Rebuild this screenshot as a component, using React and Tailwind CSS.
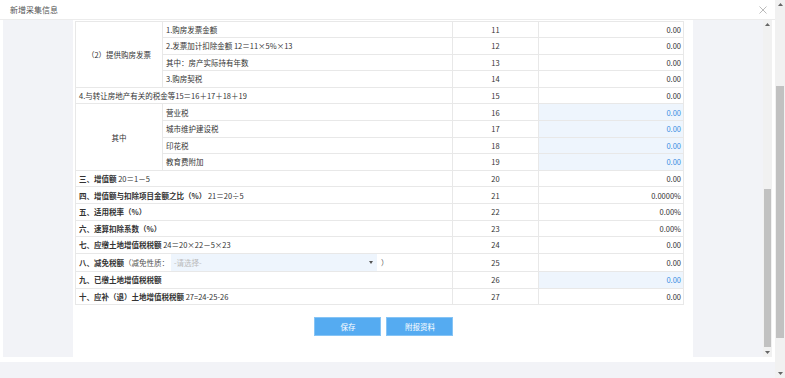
import React from 'react'

const font = { fontFamily: "'Noto Sans CJK SC', 'Noto Sans', sans-serif" }

function Tri({ down }) {
  return (
    <svg width="5" height="3" viewBox="0 0 5 3" className="block">
      {down ? <path d="M0 0 L5 0 L2.5 3 Z" fill="#666" /> : <path d="M0 3 L5 3 L2.5 0 Z" fill="#666" />}
    </svg>
  )
}

function Scrollbar({ thumbTop, thumbBottom, className }) {
  return (
    <div className={`relative bg-[#f1f1f1] ${className}`}>
      <div className="absolute left-0 right-0 top-[3px] flex justify-center"><Tri /></div>
      <div className="absolute left-[1px] right-[1px] bg-[#c1c1c1]" style={{ top: thumbTop, bottom: thumbBottom }} />
      <div className="absolute left-0 right-0 bottom-[3px] flex justify-center"><Tri down /></div>
    </div>
  )
}

const td = 'border border-[#e8e8e8] px-[3px] text-[7.5px] text-[#333] whitespace-nowrap'
const num = 'border border-[#e8e8e8] text-center text-[7.5px] text-[#333]'

function Val({ v, blue }) {
  return (
    <td className={`border border-[#e8e8e8] pr-[2px] text-right text-[7.5px] ${blue ? 'bg-[#eef5fd] text-[#3b8fe3]' : 'text-[#333]'}`}>{v}</td>
  )
}

function Row({ label, n, v, blue, h = 'h-[16.6px]' }) {
  return (
    <tr className={h}>
      <td colSpan={2} className={td}>{label}</td>
      <td className={num}>{n}</td>
      <Val v={v} blue={blue} />
    </tr>
  )
}

export default function App() {
  return (
    <div className="w-[785px] h-[378px] flex bg-white overflow-hidden" style={font}>
      <div className="w-[775px] flex flex-col">
        <div className="h-[20px] flex items-center justify-between pl-[10px] pr-[8px] bg-white border-b border-[#ececec]">
          <span className="text-[8px] text-[#555]">新增采集信息</span>
          <svg width="8" height="8" viewBox="0 0 8 8">
            <path d="M0.5 0.5 L7.5 7.5 M7.5 0.5 L0.5 7.5" stroke="#aaa" strokeWidth="0.8" />
          </svg>
        </div>
        <div className="h-[337px] flex pl-[2.7px]">
          <div className="w-[70.3px] bg-[#f2f3f7]" />
          <div className="w-[620px] bg-white pl-[2px] flex flex-col">
            <table className="table-fixed border-collapse w-[608px] mt-[0.5px]">
              <colgroup>
                <col className="w-[87px]" />
                <col className="w-[290px]" />
                <col className="w-[86px]" />
                <col className="w-[145px]" />
              </colgroup>
              <tbody>
                <tr className="h-[16.6px]">
                  <td rowSpan={4} className={`${td} text-center`}>（2）提供购房发票</td>
                  <td className={td}>1.购房发票金额</td>
                  <td className={num}>11</td>
                  <Val v="0.00" />
                </tr>
                <tr className="h-[16.6px]">
                  <td className={td}>2.发票加计扣除金额 12＝11×5%×13</td>
                  <td className={num}>12</td>
                  <Val v="0.00" />
                </tr>
                <tr className="h-[16.6px]">
                  <td className={td}>其中：房产实际持有年数</td>
                  <td className={num}>13</td>
                  <Val v="0.00" />
                </tr>
                <tr className="h-[16.6px]">
                  <td className={td}>3.购房契税</td>
                  <td className={num}>14</td>
                  <Val v="0.00" />
                </tr>
                <Row label="4.与转让房地产有关的税金等15＝16＋17＋18＋19" n="15" v="0.00" />
                <tr className="h-[16.6px]">
                  <td rowSpan={4} className={`${td} text-center`}>其中</td>
                  <td className={td}>营业税</td>
                  <td className={num}>16</td>
                  <Val v="0.00" blue />
                </tr>
                <tr className="h-[16.6px]">
                  <td className={td}>城市维护建设税</td>
                  <td className={num}>17</td>
                  <Val v="0.00" blue />
                </tr>
                <tr className="h-[16.6px]">
                  <td className={td}>印花税</td>
                  <td className={num}>18</td>
                  <Val v="0.00" blue />
                </tr>
                <tr className="h-[16.6px]">
                  <td className={td}>教育费附加</td>
                  <td className={num}>19</td>
                  <Val v="0.00" blue />
                </tr>
                <Row label={<><b>三、增值额</b> 20＝1－5</>} n="20" v="0.00" />
                <Row label={<><b>四、增值额与扣除项目金额之比（%）</b> 21＝20÷5</>} n="21" v="0.0000%" />
                <Row label={<b>五、适用税率（%）</b>} n="22" v="0.00%" />
                <Row label={<b>六、速算扣除系数（%）</b>} n="23" v="0.00%" />
                <Row label={<><b>七、应缴土地增值税税额</b> 24＝20×22－5×23</>} n="24" v="0.00" />
                <tr className="h-[18.4px]">
                  <td colSpan={2} className={`${td} py-0`}>
                    <div className="flex items-center h-[17px]">
                      <b>八、减免税额</b>
                      <span className="text-[#555]">（减免性质：</span>
                      <div className="ml-[2px] w-[206px] h-full bg-[#eef5fd] flex items-center justify-between pl-[3px] pr-[4px]">
                        <span className="text-[#bbb]">-请选择-</span>
                        <svg width="4" height="3" viewBox="0 0 4 3"><path d="M0 0 L4 0 L2 3 Z" fill="#555" /></svg>
                      </div>
                      <span className="ml-[4px] text-[#555]">）</span>
                    </div>
                  </td>
                  <td className={num}>25</td>
                  <Val v="0.00" />
                </tr>
                <Row label={<b>九、已缴土地增值税税额</b>} n="26" v="0.00" blue />
                <Row label={<><b>十、应补（退）土地增值税税额</b> 27=24-25-26</>} n="27" v="0.00" />
              </tbody>
            </table>
            <div className="flex justify-center gap-[5px] mt-[12px]">
              <button className="w-[67px] h-[19px] bg-[#55abf1] border border-[#86c4f5] text-white text-[7.5px]">保存</button>
              <button className="w-[67px] h-[19px] bg-[#55abf1] border border-[#86c4f5] text-white text-[7.5px]">附报资料</button>
            </div>
          </div>
          <div className="w-[70px] bg-[#f2f3f7]" />
          <Scrollbar className="w-[9px]" thumbTop={169} thumbBottom={10} />
        </div>
        <div className="h-[5px] bg-white" />
        <div className="flex-1 bg-[#f2f3f7]" />
      </div>
      <Scrollbar className="w-[10px]" thumbTop={86} thumbBottom={40} />
    </div>
  )
}
